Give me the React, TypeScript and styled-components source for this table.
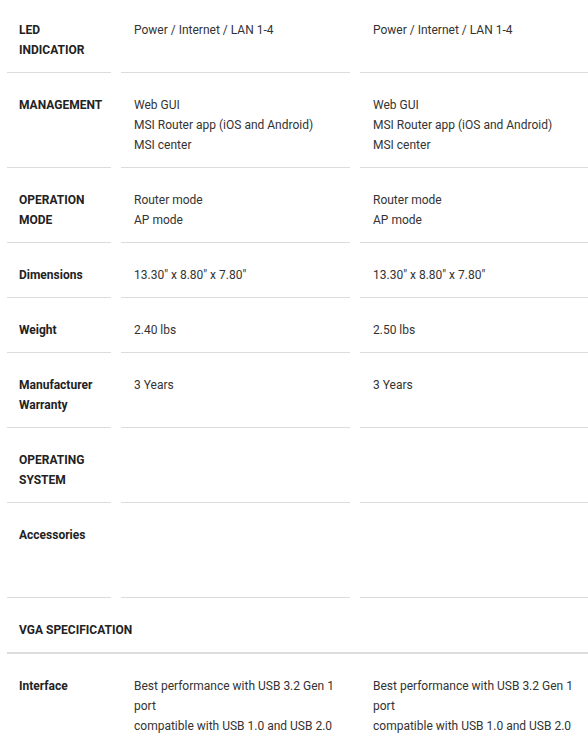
import { FC } from "react";
import styled, { createGlobalStyle } from "styled-components";

interface SpecRow {
    label: string;
    values: string[][];
    minLines?: number;
}

const specs: SpecRow[] = [
    {
        label: "LED INDICATIOR",
        values: [["Power / Internet / LAN 1-4"], ["Power / Internet / LAN 1-4"]],
    },
    {
        label: "MANAGEMENT",
        values: [
            ["Web GUI", "MSI Router app (iOS and Android)", "MSI center"],
            ["Web GUI", "MSI Router app (iOS and Android)", "MSI center"],
        ],
    },
    {
        label: "OPERATION MODE",
        values: [
            ["Router mode", "AP mode"],
            ["Router mode", "AP mode"],
        ],
    },
    {
        label: "Dimensions",
        values: [['13.30" x 8.80" x 7.80"'], ['13.30" x 8.80" x 7.80"']],
    },
    { label: "Weight", values: [["2.40 lbs"], ["2.50 lbs"]] },
    { label: "Manufacturer Warranty", values: [["3 Years"], ["3 Years"]] },
    { label: "OPERATING SYSTEM", values: [[], []], minLines: 2 },
    { label: "Accessories", values: [[], []], minLines: 3 },
];

const vgaSpecs: SpecRow[] = [
    {
        label: "Interface",
        values: [
            [
                "Best performance with USB 3.2 Gen 1 port",
                "compatible with USB 1.0 and USB 2.0",
            ],
            [
                "Best performance with USB 3.2 Gen 1 port",
                "compatible with USB 1.0 and USB 2.0",
            ],
        ],
    },
];

const Row: FC<{ row: SpecRow }> = ({ row }) => (
    <RowGrid>
        <LabelCell $minLines={row.minLines ?? 1}>{row.label}</LabelCell>
        {row.values.map((lines, i) => (
            <ValueCell key={i} $minLines={row.minLines ?? 1}>
                {lines.map((line, j) => (
                    <Line key={j}>{line}</Line>
                ))}
            </ValueCell>
        ))}
    </RowGrid>
);

export default function App() {
    return (
        <>
            <GlobalStyle />
            <Table>
                {specs.map((row) => (
                    <Row key={row.label} row={row} />
                ))}
                <SectionHeader>VGA SPECIFICATION</SectionHeader>
                {vgaSpecs.map((row) => (
                    <Row key={row.label} row={row} />
                ))}
            </Table>
        </>
    );
}

const GlobalStyle = createGlobalStyle`
    body {
        margin: 0;
        background: #fff;
        overflow: hidden;
        font-family: Roboto, "Liberation Sans", sans-serif;
    }
`;

const Table = styled.div`
    display: flex;
    flex-direction: column;
    margin-top: -2px;
    padding-left: 7px;
    width: 582px;
    font-size: 12px;
    line-height: 20px;
    color: #2b2b2b;
`;

const RowGrid = styled.div`
    display: grid;
    grid-template-columns: 104px 229px 229px;
    column-gap: 10px;
`;

const Cell = styled.div<{ $minLines: number }>`
    padding: 22px 12px 12px;
    border-bottom: 1px solid #dcdcdc;
    min-height: ${(p) => p.$minLines * 20}px;
`;

const LabelCell = styled(Cell)`
    font-weight: 700;
    color: #222;
`;

const ValueCell = styled(Cell)`
    padding-left: 13px;
    padding-right: 11px;
    color: #333;
`;

const Line = styled.div``;

const SectionHeader = styled.div`
    padding: 22px 12px 12px;
    border-bottom: 2px solid #dcdcdc;
    font-weight: 700;
    color: #222;
`;
